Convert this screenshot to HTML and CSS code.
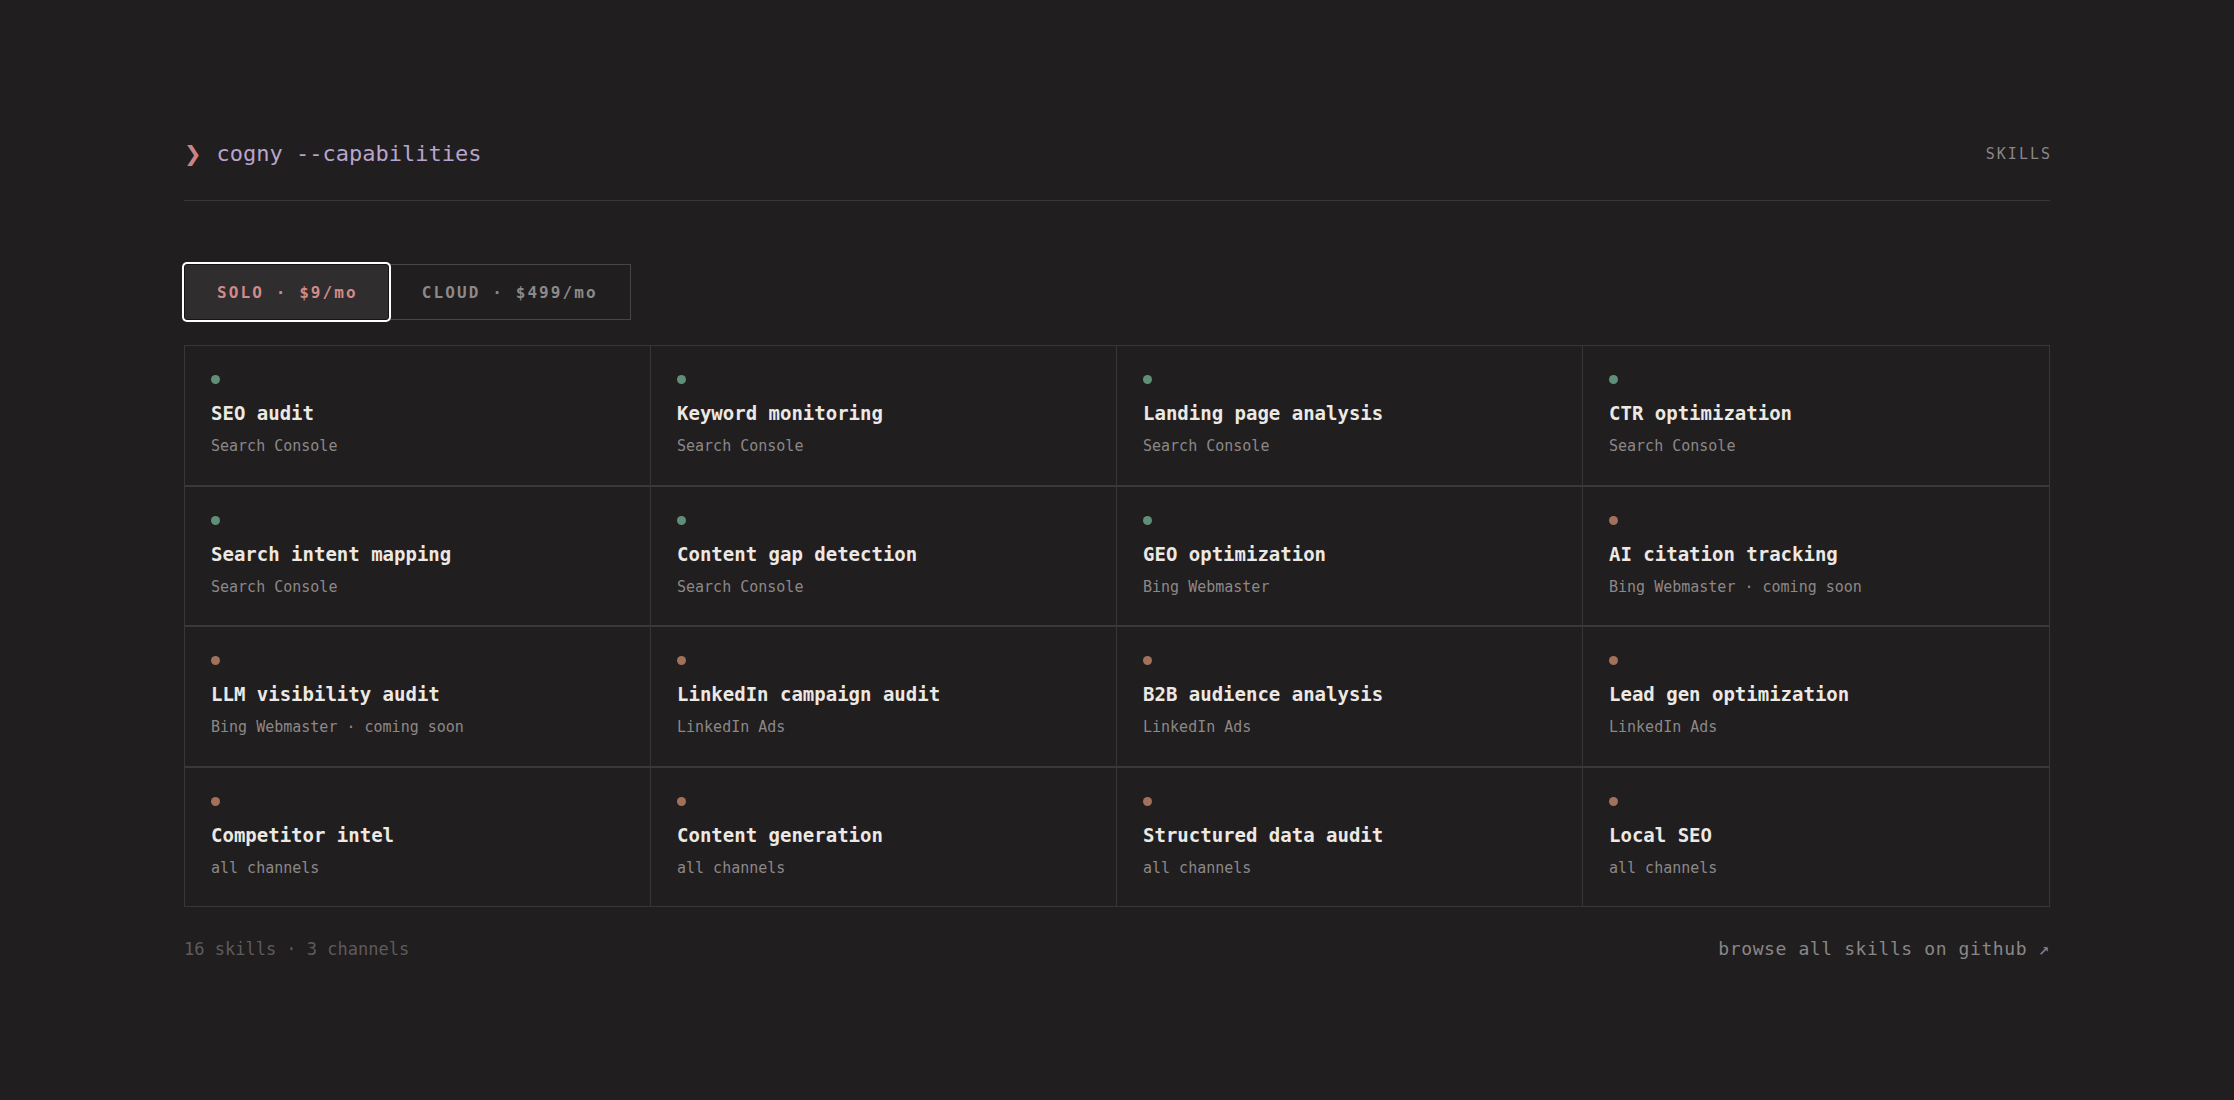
FILE: index.html
```html
<html>
  <head>
    <link rel="stylesheet" href="styles.css">
  </head>
  <body>
    <div id="root">
      <div class="head">
        <div class="prompt"><span class="chev">&#10095;</span>cogny --capabilities</div>
        <div class="tag">SKILLS</div>
      </div>

      <div class="tabs">
        <button class="tab active">SOLO · $9/mo</button>
        <button class="tab">CLOUD · $499/mo</button>
      </div>

      <div class="grid">
        <div class="cell"><span class="dot live"></span><div class="name">SEO audit</div><div class="src">Search Console</div></div>
        <div class="cell"><span class="dot live"></span><div class="name">Keyword monitoring</div><div class="src">Search Console</div></div>
        <div class="cell"><span class="dot live"></span><div class="name">Landing page analysis</div><div class="src">Search Console</div></div>
        <div class="cell"><span class="dot live"></span><div class="name">CTR optimization</div><div class="src">Search Console</div></div>

        <div class="cell"><span class="dot live"></span><div class="name">Search intent mapping</div><div class="src">Search Console</div></div>
        <div class="cell"><span class="dot live"></span><div class="name">Content gap detection</div><div class="src">Search Console</div></div>
        <div class="cell"><span class="dot live"></span><div class="name">GEO optimization</div><div class="src">Bing Webmaster</div></div>
        <div class="cell"><span class="dot soon"></span><div class="name">AI citation tracking</div><div class="src">Bing Webmaster · coming soon</div></div>

        <div class="cell"><span class="dot soon"></span><div class="name">LLM visibility audit</div><div class="src">Bing Webmaster · coming soon</div></div>
        <div class="cell"><span class="dot soon"></span><div class="name">LinkedIn campaign audit</div><div class="src">LinkedIn Ads</div></div>
        <div class="cell"><span class="dot soon"></span><div class="name">B2B audience analysis</div><div class="src">LinkedIn Ads</div></div>
        <div class="cell"><span class="dot soon"></span><div class="name">Lead gen optimization</div><div class="src">LinkedIn Ads</div></div>

        <div class="cell"><span class="dot soon"></span><div class="name">Competitor intel</div><div class="src">all channels</div></div>
        <div class="cell"><span class="dot soon"></span><div class="name">Content generation</div><div class="src">all channels</div></div>
        <div class="cell"><span class="dot soon"></span><div class="name">Structured data audit</div><div class="src">all channels</div></div>
        <div class="cell"><span class="dot soon"></span><div class="name">Local SEO</div><div class="src">all channels</div></div>
      </div>

      <div class="foot">
        <div class="count">16 skills · 3 channels</div>
        <a class="more" href="#">browse all skills on github ↗</a>
      </div>
    </div>
  </body>
</html>
```

FILE: styles.css
```css
body {
  margin: 0;
  background: #201e1f;
  font-family: "DejaVu Sans Mono", "Liberation Mono", monospace;
  color: #ece8e4;
}
#root {
  width: 1866px;
  margin: 0 auto;
  padding-top: 139px;
}

/* HEADER ====================================== */
.head {
  display: flex;
  align-items: center;
  justify-content: space-between;
  padding-bottom: 31px;
  border-bottom: 1px solid #383636;
}
.prompt {
  font-size: 22px;
  line-height: 30px;
  color: #b8a4cc;
}
.chev {
  color: #c98585;
  font-family: "DejaVu Sans", sans-serif;
  font-size: 21px;
  margin-right: 15px;
}
.tag {
  font-size: 15px;
  letter-spacing: 2px;
  margin-right: -2px;
  color: #8a8787;
}

/* TABS ======================================== */
.tabs {
  display: flex;
  margin-top: 63px;
}
.tab {
  font-family: inherit;
  font-size: 16px;
  font-weight: bold;
  letter-spacing: 2.1px;
  height: 56px;
  padding: 0 32px 0 32px;
  background: transparent;
  color: #8c8989;
  border: 1px solid #474545;
}
.tab.active {
  padding: 0 30px 0 32px;
  background: #2f2d2d;
  color: #d08a8a;
  border-color: #161515;
  border-radius: 3px;
  box-shadow: 0 0 0 2px #ffffff;
  position: relative;
}

/* GRID ======================================== */
.grid {
  margin-top: 25px;
  display: grid;
  grid-template-columns: repeat(4, 1fr);
  border: 1px solid #383636;
}
.cell {
  padding: 29px 26px 28.6px;
  border-right: 1px solid #383636;
  border-bottom: 2px solid #3a3838;
  display: flex;
  flex-direction: column;
  align-items: flex-start;
}
.cell:nth-child(4n) { border-right: none; }
.cell:nth-last-child(-n+4) { border-bottom: none; }
.dot {
  width: 9px;
  height: 9px;
  border-radius: 50%;
  margin-bottom: 17px;
}
.dot.live { background: #5f8f78; }
.dot.soon { background: #a3705a; }
.name {
  font-size: 19px;
  line-height: 24px;
  font-weight: bold;
  color: #ece8e4;
}
.src {
  margin-top: 11px;
  font-size: 15px;
  line-height: 20px;
  color: #8c8888;
}

/* FOOTER ====================================== */
.foot {
  display: flex;
  justify-content: space-between;
  align-items: baseline;
  margin-top: 30px;
}
.count {
  font-size: 17px;
  line-height: 24px;
  color: #5e5b5b;
}
.more {
  font-size: 18px;
  letter-spacing: 0.6px;
  color: #8a8787;
  text-decoration: none;
}
```
